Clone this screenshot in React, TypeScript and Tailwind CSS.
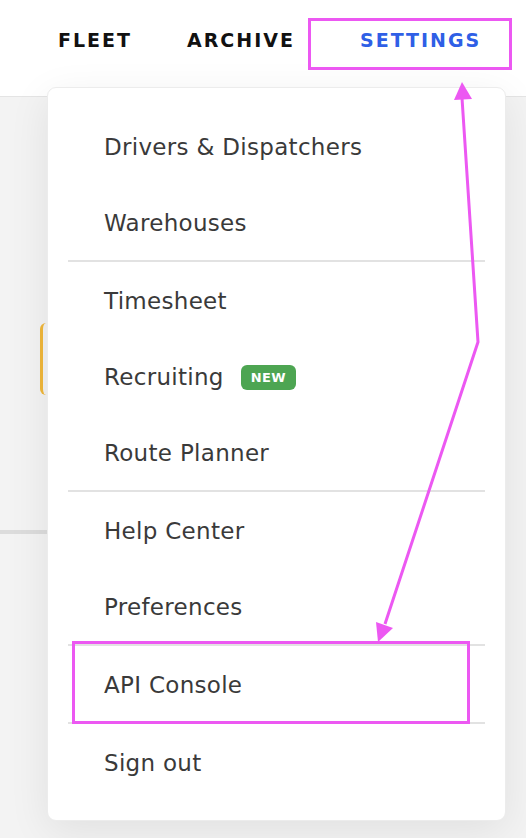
import React from "react";

type Item = { label: string; badge?: string; divider?: boolean };

const items: Item[] = [
  { label: "Drivers & Dispatchers" },
  { label: "Warehouses", divider: true },
  { label: "Timesheet" },
  { label: "Recruiting", badge: "NEW" },
  { label: "Route Planner", divider: true },
  { label: "Help Center" },
  { label: "Preferences", divider: true },
  { label: "API Console", divider: true },
  { label: "Sign out" },
];

const Annotations = () => (
  <svg
    className="absolute inset-0 pointer-events-none"
    width={526}
    height={838}
    viewBox="0 0 526 838"
  >
    <rect x={309.5} y={19.5} width={201} height={49} fill="none" stroke="#ec58f2" strokeWidth={3} />
    <rect x={73.5} y={642.5} width={395} height={80} fill="none" stroke="#ec58f2" strokeWidth={3} />
    <polyline points="462,98 478,342 385,624" fill="none" stroke="#ec58f2" strokeWidth={3} strokeLinejoin="miter" />
    <polygon points="462,82 454,100 472,99" fill="#ec58f2" />
    <polygon points="378,642 376,622 393,628" fill="#ec58f2" />
  </svg>
);

export default function App() {
  return (
    <div
      className="relative w-[526px] h-[838px] overflow-hidden bg-[#f3f3f3]"
      style={{ fontFamily: "'DejaVu Sans', 'Open Sans', sans-serif" }}
    >
      {/* header */}
      <div className="h-[97px] bg-white border-b border-[#e4e4e4] flex items-start pt-[26px] pl-[58px] font-bold text-[19px] tracking-[2px]">
        <span className="w-[129px] text-[#111]">FLEET</span>
        <span className="w-[173px] text-[#111]">ARCHIVE</span>
        <span className="text-[#2f5fe6]">SETTINGS</span>
      </div>

      {/* page content behind the menu */}
      <div className="flex flex-col">
        <div className="mt-[226px] ml-[40px] w-[60px] h-[72px] rounded-[6px] border-l-[3px] border-[#f0b73a]" />
        <div className="mt-[135px] w-[60px] h-[4px] bg-[#dcdcdc]" />
      </div>

      {/* settings dropdown */}
      <div className="absolute left-[47px] top-[87px] w-[459px] bg-white rounded-[9px] border border-[#ececec] shadow-[0_10px_40px_rgba(0,0,0,0.08)] pt-[20px] pb-[20px]">
        {items.map((item) => (
          <React.Fragment key={item.label}>
            <div className="h-[76px] flex items-center pt-[3px] pl-[56px] text-[23px] tracking-[0.3px] text-[#3a3a3a]">
              <span>{item.label}</span>
              {item.badge && (
                <span className="ml-[17px] h-[25px] px-[10px] flex items-center rounded-[6px] bg-[#4da552] text-white text-[13px] font-bold tracking-[0.3px]">
                  {item.badge}
                </span>
              )}
            </div>
            {item.divider && <div className="mx-[20px] h-[2px] bg-[#e2e2e2]" />}
          </React.Fragment>
        ))}
      </div>

      <Annotations />
    </div>
  );
}
